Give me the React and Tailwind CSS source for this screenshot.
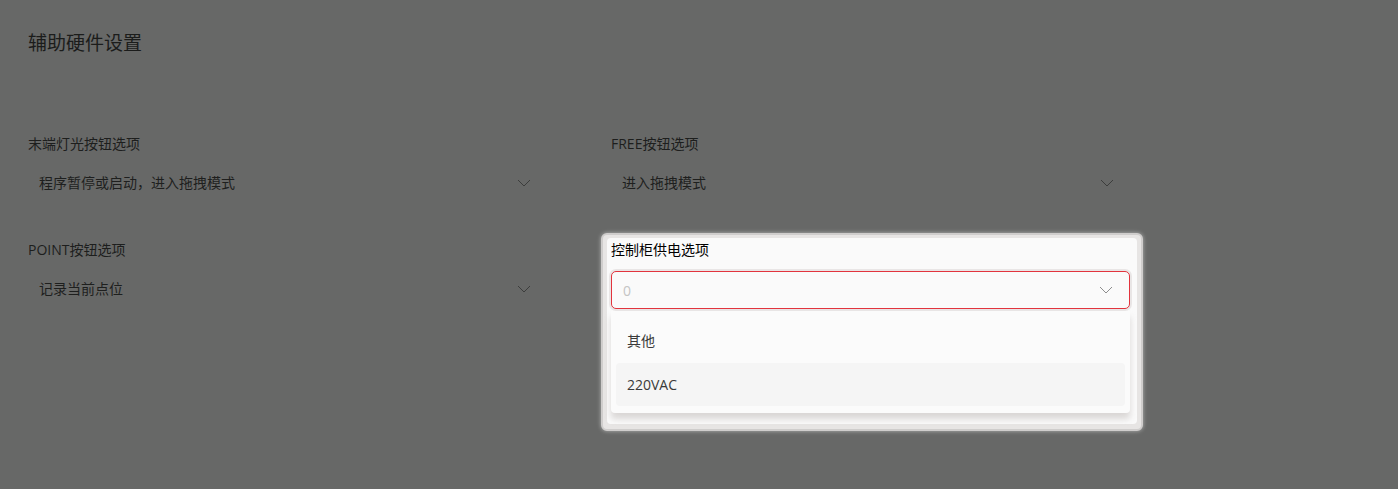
const Chevron = ({ className }) => (
  <svg width="14" height="8" viewBox="0 0 14 8" fill="none" className={className}>
    <polyline points="1,1 7,7 13,1" stroke="currentColor" strokeWidth="1" />
  </svg>
);

function Field({ label, value }) {
  return (
    <div className="flex flex-col">
      <div className="h-[20px] leading-[20px] text-[14px] text-[#1d1e1d]">{label}</div>
      <div className="mt-[10px] flex h-[37px] items-center justify-between pl-[11px] pr-[16px] text-[14px] text-[#1e1f1e]">
        <span>{value}</span>
        <Chevron className="text-[#3c3d3c]" />
      </div>
    </div>
  );
}

function ActiveField() {
  return (
    <div className="relative flex flex-col">
      {/* highlight backdrop */}
      <div className="absolute left-[-10px] right-[-13px] top-[-7px] h-[198px] rounded-[6px] border-2 border-[#cfcdcc] bg-[#e7e5e4] shadow-[0_0_4px_rgba(255,255,255,0.5)]" />
      <div className="absolute left-[-4px] right-[-7px] top-[-2px] h-[186px] rounded-[4px] bg-[#fafafa]" />
      <div className="relative h-[20px] leading-[20px] text-[14px] text-black">控制柜供电选项</div>
      <div className="relative mt-[11px] flex h-[38px] items-center justify-between rounded-[5px] border border-[#e2343d] bg-[#fafafa] pl-[11px] pr-[16px] text-[14px] text-[#c4c4c4] ring-2 ring-[#e9e6e6]">
        <span>0</span>
        <Chevron className="text-[#8d8d8d]" />
      </div>
      <div className="relative mt-[2px] flex h-[102px] flex-col rounded-b-[4px] bg-[#fbfbfb] px-[5px] pt-[6px] text-[14px] text-[#3a3a3a] shadow-[0_6px_6px_rgba(180,172,170,0.45)]">
        <div className="flex h-[46px] items-center pl-[11px]">其他</div>
        <div className="flex h-[43px] items-center rounded-[4px] bg-[#f5f5f5] pl-[11px]">220VAC</div>
      </div>
    </div>
  );
}

export default function App() {
  return (
    <div
      className="h-[489px] w-[1398px] overflow-hidden bg-[#676867] pl-[28px] pt-[29px]"
      style={{ fontFamily: '"Open Sans", "Noto Sans CJK SC", sans-serif' }}
    >
      <div className="h-[28px] leading-[28px] text-[19px] text-[#1b1c1b]">辅助硬件设置</div>
      <div className="mt-[77px] grid w-[1102px] grid-cols-2 gap-x-[64px] gap-y-[39px]">
        <Field label="末端灯光按钮选项" value="程序暂停或启动，进入拖拽模式" />
        <Field label="FREE按钮选项" value="进入拖拽模式" />
        <Field label="POINT按钮选项" value="记录当前点位" />
        <ActiveField />
      </div>
    </div>
  );
}
